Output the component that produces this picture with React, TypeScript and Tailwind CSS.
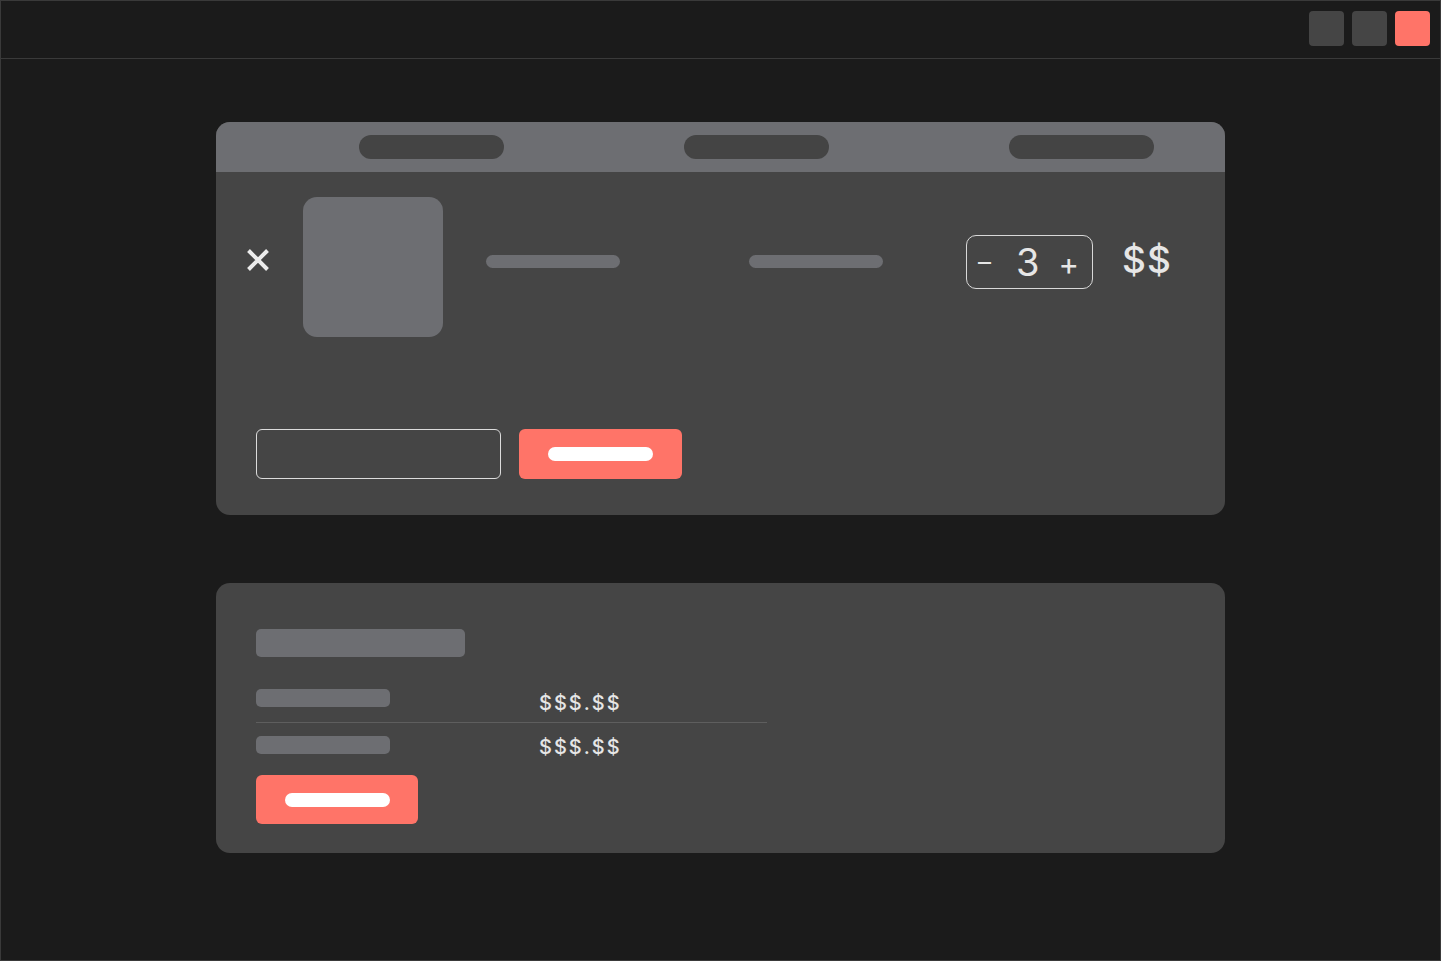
export default function App() {
  return (
    <div className="h-screen w-full overflow-hidden bg-[#1b1b1b] border border-[#3a3a3a] flex flex-col font-['Inter','Roboto',sans-serif] text-[#e6e6e6]">
      <header className="h-[58px] shrink-0 border-b border-[#3a3a3a] flex items-center justify-end gap-2 pr-[10px] pb-[2px]">
        <div className="w-[35px] h-[35px] rounded-[4px] bg-[#454545]" />
        <div className="w-[35px] h-[35px] rounded-[4px] bg-[#454545]" />
        <div className="w-[35px] h-[35px] rounded-[4px] bg-[#ff7468]" />
      </header>

      <main className="flex-1 flex flex-col items-center pt-[63px] gap-[68px]">
        {/* cart card */}
        <section className="w-[1009px] h-[393px] rounded-[14px] bg-[#454545] overflow-hidden flex flex-col">
          <div className="h-[50px] bg-[#6d6e72] flex items-center pl-[143px] gap-[180px]">
            <div className="w-[145px] h-[24px] rounded-full bg-[#444444]" />
            <div className="w-[145px] h-[24px] rounded-full bg-[#444444]" />
            <div className="w-[145px] h-[24px] rounded-full bg-[#444444]" />
          </div>

          <div className="flex items-start mt-[25px] pl-[30px]">
            <div className="w-[24px] h-[24px] mt-[51px] flex items-center justify-center">
              <svg width="24" height="24" viewBox="0 0 24 24" fill="none">
                <path d="M2.5 2.5 L21.5 21.5 M21.5 2.5 L2.5 21.5" stroke="#ececec" strokeWidth="4" />
              </svg>
            </div>
            <div className="w-[140px] h-[140px] ml-[33px] rounded-[14px] bg-[#6d6e72]" />
            <div className="w-[134px] h-[13px] ml-[43px] mt-[58px] rounded-full bg-[#6d6e72]" />
            <div className="w-[134px] h-[13px] ml-[129px] mt-[58px] rounded-full bg-[#6d6e72]" />
            <div className="w-[127px] h-[54px] ml-[83px] mt-[38px] rounded-[10px] border border-[#d8d8d8] flex items-center justify-between pl-[11px] pr-[13px]">
              <span className="text-[26px] leading-none">–</span>
              <span className="text-[38px] leading-none ml-[6px]">3</span>
              <span className="text-[31px] leading-none mt-[2px]">+</span>
            </div>
            <div className="ml-[29px] mt-[44px] text-[37px] leading-none font-medium tracking-[1px]">$$</div>
          </div>

          <div className="flex gap-[18px] pl-[40px] mt-[92px]">
            <div className="w-[245px] h-[50px] rounded-[6px] border border-[#dcdcdc]" />
            <div className="w-[163px] h-[50px] rounded-[6px] bg-[#ff7468] flex items-center justify-center">
              <div className="w-[105px] h-[14px] rounded-full bg-white" />
            </div>
          </div>
        </section>

        {/* summary card */}
        <section className="w-[1009px] h-[270px] rounded-[14px] bg-[#454545] px-[40px] pt-[46px]">
          <div className="w-[209px] h-[28px] rounded-[5px] bg-[#6d6e72]" />
          <div className="w-[511px] mt-[32px]">
            <div className="flex items-center h-[18px]">
              <div className="w-[134px] h-[18px] rounded-[5px] bg-[#6d6e72]" />
              <span className="ml-[149px] mt-[10px] text-[20px] leading-none font-medium tracking-[2px]">$$$.$$</span>
            </div>
            <div className="h-px bg-[#5e5e5e] mt-[15px]" />
            <div className="flex items-center h-[18px] mt-[13px]">
              <div className="w-[134px] h-[18px] rounded-[5px] bg-[#6d6e72]" />
              <span className="ml-[149px] mt-[4px] text-[20px] leading-none font-medium tracking-[2px]">$$$.$$</span>
            </div>
          </div>
          <div className="w-[162px] h-[49px] mt-[21px] rounded-[6px] bg-[#ff7468] flex items-center justify-center">
            <div className="w-[105px] h-[14px] rounded-full bg-white" />
          </div>
        </section>
      </main>
    </div>
  );
}
